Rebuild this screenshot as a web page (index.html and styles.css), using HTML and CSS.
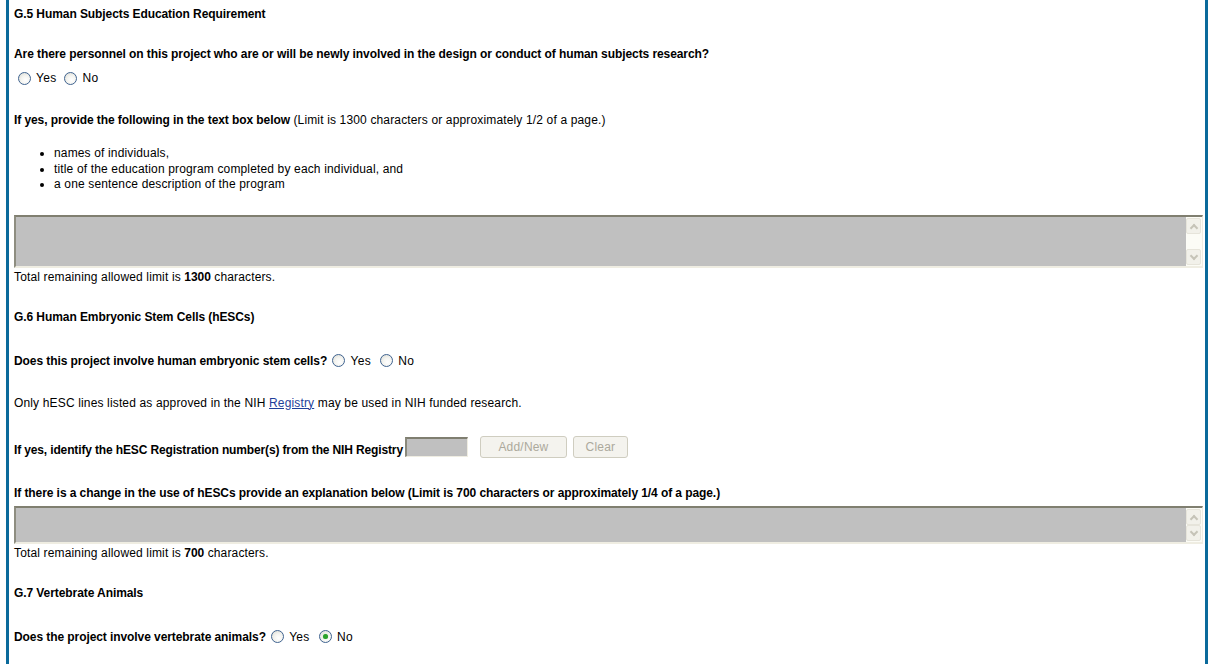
FILE: index.html
```html
<!DOCTYPE html>
<html>
<head>
<meta charset="utf-8">
<link rel="stylesheet" href="styles.css">
</head>
<body>
<div class="page">
  <div class="line b">G.5 Human Subjects Education Requirement</div>
  <div class="line b gap25">Are there personnel on this project who are or will be newly involved in the design or conduct of human subjects research?</div>
  <div class="radios gap8">
    <span class="radio"></span><span class="rlabel">Yes</span>
    <span class="radio"></span><span class="rlabel">No</span>
  </div>
  <div class="line gap27"><b class="b">If yes, provide the following in the text box below</b> (Limit is 1300 characters or approximately 1/2 of a page.)</div>
  <ul class="bullets">
    <li>names of individuals,</li>
    <li>title of the education program completed by each individual, and</li>
    <li>a one sentence description of the program</li>
  </ul>
  <div class="tarea tall">
    <div class="tfield"></div>
    <div class="sbar"><span class="sbtn up"></span><span class="sbtn down"></span></div>
  </div>
  <div class="line gap2">Total remaining allowed limit is <b class="b">1300</b> characters.</div>

  <div class="line b gap25">G.6 Human Embryonic Stem Cells (hESCs)</div>
  <div class="line b gap29 inlineq">Does this project involve human embryonic stem cells?
    <span class="radio first"></span><span class="rlabel n">Yes</span>
    <span class="radio"></span><span class="rlabel n">No</span>
  </div>
  <div class="line gap27">Only hESC lines listed as approved in the NIH <a href="#" class="link">Registry</a> may be used in NIH funded research.</div>
  <div class="idrow">
    <span class="b idlabel">If yes, identify the hESC Registration number(s) from the NIH Registry</span>
    <span class="minput"></span>
    <span class="btn add">Add/New</span>
    <span class="btn clear">Clear</span>
  </div>
  <div class="line b gap28">If there is a change in the use of hESCs provide an explanation below (Limit is 700 characters or approximately 1/4 of a page.)</div>
  <div class="tarea short">
    <div class="tfield"></div>
    <div class="sbar"><span class="sbtn up"></span><span class="sbtn down"></span></div>
  </div>
  <div class="line gap2">Total remaining allowed limit is <b class="b">700</b> characters.</div>

  <div class="line b gap25">G.7 Vertebrate Animals</div>
  <div class="line b gap29 inlineq">Does the project involve vertebrate animals?
    <span class="radio first"></span><span class="rlabel n">Yes</span>
    <span class="radio checked"></span><span class="rlabel n">No</span>
  </div>
</div>
</body>
</html>
```

FILE: styles.css
```css
html, body {
  margin: 0;
  padding: 0;
  background: #ffffff;
}
body {
  font-family: "Liberation Sans", Arial, sans-serif;
  font-size: 12px;
  color: #000;
  letter-spacing: 0.15px;
}
.page {
  margin-left: 6px;
  width: 1202px;
  height: 664px;
  box-sizing: border-box;
  border-left: 3px solid #0b6a9b;
  border-right: 3px solid #0b6a9b;
  padding: 7px 2px 0 5px;
  overflow: hidden;
}
.line {
  line-height: 15px;
  white-space: nowrap;
}
.b {
  font-weight: bold;
  letter-spacing: -0.08px;
}
.gap2 { margin-top: 2px; }
.gap8 { margin-top: 8px; }
.gap25 { margin-top: 25px; }
.gap27 { margin-top: 27px; }
.gap28 { margin-top: 28px; }
.gap29 { margin-top: 29px; }

.radios {
  height: 16px;
  display: flex;
  align-items: center;
  padding-left: 4px;
}
.radio {
  display: inline-block;
  width: 11px;
  height: 11px;
  border: 1px solid #3f6390;
  border-radius: 50%;
  background: radial-gradient(circle at 60% 65%, #ffffff 0%, #f4f4f0 45%, #d8d8d0 100%);
  position: relative;
  vertical-align: -2px;
}
.radio.checked::after {
  content: "";
  position: absolute;
  left: 3px;
  top: 3px;
  width: 5px;
  height: 5px;
  border-radius: 50%;
  background: #2aa12a;
  box-shadow: 0 0 1px #7fd27f;
}
.rlabel {
  margin-left: 5px;
  margin-right: 8px;
  letter-spacing: 0.3px;
}
.inlineq .radio { margin-left: 3px; }
.inlineq .radio.first { margin-left: 2px; }
.rlabel.n {
  font-weight: normal;
  margin-left: 5px;
  margin-right: 3px;
  letter-spacing: 0.3px;
}

.bullets {
  margin: 18px 0 0 0;
  padding-left: 40px;
  line-height: 15.5px;
}
.bullets li {
  white-space: nowrap;
}

.tarea {
  display: flex;
  width: 1189px;
  margin-top: 22px;
  box-sizing: border-box;
  border-top: 2px solid #807f70;
  border-left: 2px solid #8e8d80;
  border-bottom: 2px solid #efede2;
  border-right: 1px solid #efede2;
  background: #c0c0c0;
}
.tarea.tall { height: 53px; }
.tarea.short { height: 38px; margin-top: 5px; }
.tfield {
  flex: 1;
  background: #c0c0c0;
}
.sbar {
  width: 16px;
  background: #fcfcf6;
  display: flex;
  flex-direction: column;
  justify-content: space-between;
  padding: 1px 0;
}
.sbtn {
  display: block;
  width: 15px;
  height: 16px;
  box-sizing: border-box;
  border: 1px solid #e6e4da;
  border-radius: 2px;
  background: #f2f1ea;
  position: relative;
}
.sbtn::after {
  content: "";
  position: absolute;
  left: 4px;
  width: 4px;
  height: 4px;
  border-left: 2px solid #c6c4b8;
  border-top: 2px solid #c6c4b8;
}
.sbtn.up::after { top: 6px; transform: rotate(45deg); }
.sbtn.down::after { top: 3px; transform: rotate(225deg); }

.link {
  color: #1f3f9a;
  text-decoration: underline;
}

.idrow {
  margin-top: 25px;
  height: 22px;
  display: flex;
  align-items: flex-end;
}
.idlabel {
  line-height: 15px;
  letter-spacing: -0.14px;
}
.minput {
  display: inline-block;
  width: 63px;
  height: 20px;
  box-sizing: border-box;
  margin-left: 2px;
  margin-bottom: 1px;
  border-top: 2px solid #7f7e70;
  border-left: 2px solid #8a897c;
  border-bottom: 1px solid #efede2;
  border-right: 1px solid #efede2;
  background: #c0c0c0;
}
.btn {
  display: inline-flex;
  align-items: center;
  justify-content: center;
  height: 22px;
  box-sizing: border-box;
  border: 1px solid #cfcdc0;
  border-radius: 3px;
  background: #f4f3ee;
  color: #aca99c;
  font-size: 12px;
  letter-spacing: 0.2px;
  align-self: flex-start;
}
.btn.add { width: 87px; margin-left: 12px; }
.btn.clear { width: 55px; margin-left: 6px; }
```
